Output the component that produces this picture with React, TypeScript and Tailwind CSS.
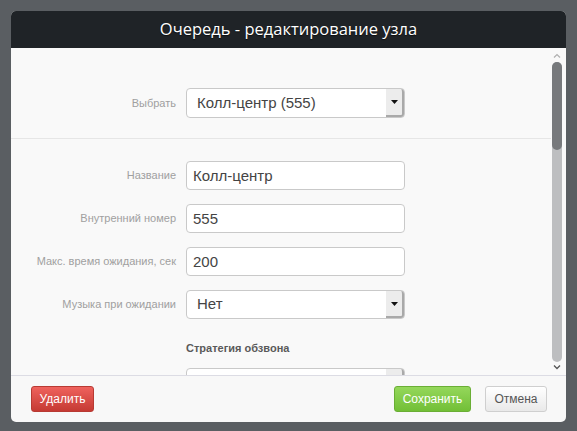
import React from "react";

const font = { fontFamily: '"Liberation Sans", Arial, sans-serif' };

function Caret() {
  return (
    <svg width="7" height="4" viewBox="0 0 7 4" className="block">
      <path d="M0 0 L7 0 L3.5 4 Z" fill="#111" />
    </svg>
  );
}

function SelectBox({ value, h = "h-[30px]" }: { value: string; h?: string }) {
  return (
    <div className={`flex ${h} w-[219px] items-stretch rounded-[4px] border border-[#c9c9c9] bg-white`}>
      <div className="flex flex-1 items-center pl-[10px] text-[15px] text-[#444]">{value}</div>
      <div className="flex w-[18px] items-center justify-center rounded-r-[3px] border-r-2 border-b-2 border-[#a9a9a9] bg-[#ececec]">
        <Caret />
      </div>
    </div>
  );
}

function TextBox({ value }: { value: string }) {
  return (
    <input
      readOnly
      value={value}
      className="h-[29px] w-[219px] rounded-[4px] border border-[#c9c9c9] bg-white pl-[6px] text-[15px] text-[#444] outline-none"
      style={font}
    />
  );
}

function Label({ children }: { children: React.ReactNode }) {
  return <div className="flex items-center justify-end text-[11px] text-[#a0a0a0] whitespace-nowrap">{children}</div>;
}

function ScrollBar() {
  return (
    <div className="flex w-[15px] flex-col items-start pl-[1px] pt-[4px]">
      <svg width="10" height="8" viewBox="0 0 10 8" className="block">
        <path d="M2 5.5 L5 2.5 L8 5.5" stroke="#b0b0b0" strokeWidth="1.2" fill="none" />
      </svg>
      <div className="mt-[2px] flex h-[300px] w-[10px] flex-col rounded-full bg-[#bdbec0]">
        <div className="h-[88px] w-[10px] rounded-full bg-[#77797c]" />
      </div>
      <svg width="10" height="8" viewBox="0 0 10 8" className="mt-[1px] block">
        <path d="M2 2.5 L5 5.5 L8 2.5" stroke="#555" strokeWidth="1.3" fill="none" />
      </svg>
    </div>
  );
}

export default function App() {
  return (
    <div className="h-[431px] w-[577px] bg-[#5a5e62] pl-[11px] pt-[11px]" style={font}>
      <div className="flex h-[411px] w-[555px] flex-col overflow-hidden rounded-[5px] bg-[#f8f8f8]">
        <div
          className="flex h-[37px] shrink-0 items-center justify-center bg-[#1f2327] text-[16.5px] text-white"
          style={{ fontFamily: '"Open Sans", "Noto Sans", sans-serif', textShadow: "0 1px 1px rgba(0,0,0,0.6)" }}
        >
          Очередь - редактирование узла
        </div>

        <div className="flex h-[327px] shrink-0 overflow-hidden bg-[#f9f9f9]">
          <div className="flex-1 overflow-hidden">
            <div className="border-b border-[#e6e6e6] pt-[40px] pb-[20px]">
              <div className="grid grid-cols-[165px_219px] gap-x-[10px]">
                <Label>Выбрать</Label>
                <SelectBox value="Колл-центр (555)" />
              </div>
            </div>
            <div className="grid grid-cols-[165px_219px] gap-x-[10px] gap-y-[14px] pt-[22px]">
              <Label>Название</Label>
              <TextBox value="Колл-центр" />
              <Label>Внутренний номер</Label>
              <TextBox value="555" />
              <Label>Макс. время ожидания, сек</Label>
              <TextBox value="200" />
              <Label>Музыка при ожидании</Label>
              <SelectBox value="Нет" h="h-[29px]" />
              <div />
              <div className="pt-[8px] text-[11px] leading-[14px] font-bold text-[#5a5a5a]">Стратегия обзвона</div>
              <div />
              <div className="-mt-[1px]">
                <SelectBox value="" />
              </div>
            </div>
          </div>
          <ScrollBar />
        </div>

        <div className="flex flex-1 items-start border-t border-[#dcdce4] px-[19px] pt-[10px] pl-[20px]">
          <button className="h-[26px] w-[63px] rounded-[3px] border border-[#b83a33] bg-gradient-to-b from-[#ef625d] to-[#c53a33] text-[12px] text-white">
            Удалить
          </button>
          <div className="flex-1" />
          <button className="h-[26px] w-[77px] rounded-[3px] border border-[#6aae35] bg-gradient-to-b from-[#94d75a] to-[#72bf36] text-[12px] text-white">
            Сохранить
          </button>
          <button className="ml-[14px] h-[26px] w-[62px] rounded-[3px] border border-[#cfcfcf] bg-gradient-to-b from-white to-[#e9e9e9] text-[12px] text-[#555]">
            Отмена
          </button>
        </div>
      </div>
    </div>
  );
}
